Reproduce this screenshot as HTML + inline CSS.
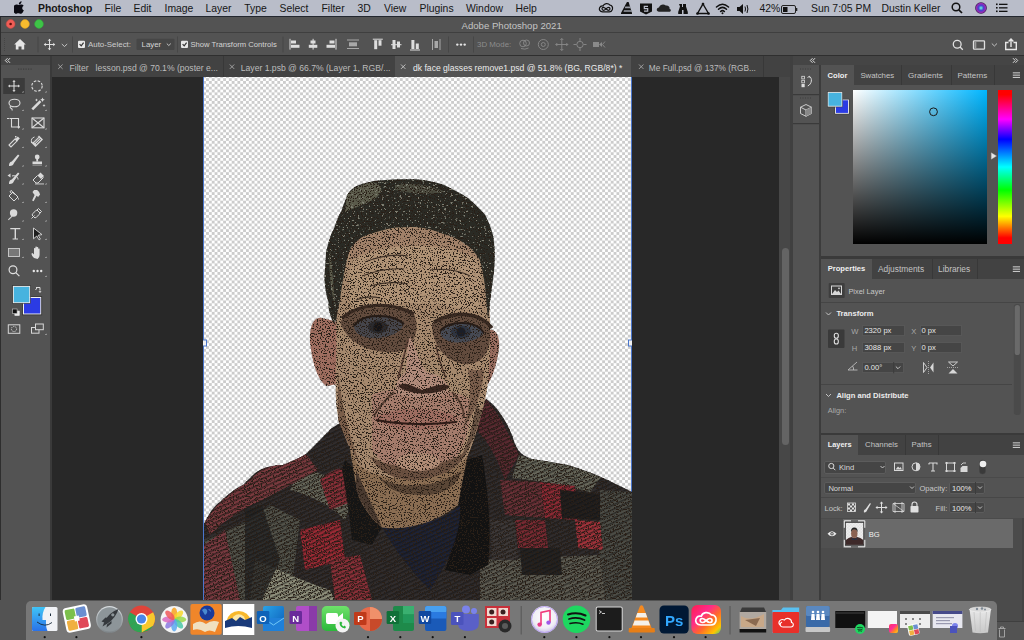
<!DOCTYPE html>
<html><head><meta charset="utf-8">
<style>
*{box-sizing:border-box;margin:0;padding:0}
html,body{width:1024px;height:640px;overflow:hidden;background:#535353;font-family:"Liberation Sans",sans-serif}
.a{position:absolute}
.t{position:absolute;white-space:nowrap;line-height:1}
#menubar{left:0;top:0;width:1024px;height:16px;background:#b9bdc9}
#menubar .t{top:3.6px;font-size:10.4px;color:#161616}
#titlebar{left:0;top:16px;width:1024px;height:17px;background:#535353;border-top:1px solid #23272f;border-bottom:1px solid #3f3f3f}
#opts{left:0;top:33px;width:1024px;height:23px;background:#535353;border-bottom:1px solid #2f2f2f}
#toolhdr{left:0;top:56px;width:50px;height:9px;background:#454545}
#tools{left:0;top:65px;width:50px;height:535px;background:#535353}
#tabbar{left:52px;top:56px;width:740px;height:21px;background:#424242}
#canvas{left:52px;top:77px;width:727px;height:523px;background:#282828}
#vscroll{left:779px;top:77px;width:13px;height:523px;background:#474747}
#phdr{left:793px;top:56px;width:231px;height:9px;background:#454545}
#strip{left:793px;top:65px;width:26px;height:535px;background:#535353}
#panels{left:821px;top:65px;width:203px;height:535px;background:#535353}
</style></head><body>
<div id="menubar" class="a">
<svg class="a" style="left:14px;top:1px" width="11" height="13" viewBox="0 0 11 13"><path d="M7.6 0.3c0.1 0.9-0.3 1.7-0.8 2.3-0.5 0.6-1.3 1-2 0.9-0.1-0.8 0.3-1.7 0.8-2.2 0.5-0.6 1.4-1 2-1z M9.9 9.3c-0.3 0.7-0.5 1-0.9 1.6-0.6 0.9-1.4 1.9-2.4 1.9-0.9 0-1.1-0.6-2.3-0.6-1.2 0-1.5 0.6-2.4 0.6-1 0-1.7-0.9-2.3-1.8C-1.9 8.6-1 5.2 0.5 4.2 1.1 3.7 1.8 3.5 2.5 3.5c1 0 1.6 0.6 2.4 0.6 0.8 0 1.3-0.6 2.4-0.6 0.9 0 1.8 0.5 2.4 1.3-2.1 1.2-1.8 4.2 0.2 4.5z" fill="#0a0a12"/></svg>
<span class="t" style="left:38px;font-weight:700">Photoshop</span>
<span class="t" style="left:104.5px">File</span>
<span class="t" style="left:133.5px">Edit</span>
<span class="t" style="left:164.5px">Image</span>
<span class="t" style="left:205.5px">Layer</span>
<span class="t" style="left:244.3px">Type</span>
<span class="t" style="left:279.5px">Select</span>
<span class="t" style="left:321.5px">Filter</span>
<span class="t" style="left:357.5px">3D</span>
<span class="t" style="left:384px">View</span>
<span class="t" style="left:419.5px">Plugins</span>
<span class="t" style="left:466px">Window</span>
<span class="t" style="left:515.5px">Help</span>
<svg class="a" style="left:598px;top:2px" width="200" height="13" viewBox="0 0 200 13">
 <g fill="none" stroke="#111" stroke-width="1.2">
  <path d="M4.5 9.8 C1.8 9.8 0.8 7.5 1.6 5.8 C2.3 4.3 3.8 3.8 5 4 C6 1.3 10 0.6 12 3.2 C14 3.3 15 5.5 14.4 7.5 C13.9 9 12.8 9.8 11.3 9.8 Z"/>
  <path d="M5.5 8.3 C3.8 8.3 3.3 5.3 5.3 5.3 C7.3 5.3 8.5 8.3 10.5 8.3 C12.5 8.3 12.5 5.3 10.5 5.3 C8.5 5.3 7.5 8.3 5.5 8.3Z"/>
 </g>
 <path d="M29.5 -1 L30.3 -1 L34 11 L34 12 L23 12 L23 11 Z" fill="#111"/>
 <path d="M27.3 4.5 L32.5 4.5 L33 6.2 L26.8 6.2Z M26 8.3 L33.8 8.3 L34.3 9.8 L25.5 9.8Z" fill="#9a9ea8"/>
 <path d="M42 1.5 L54 1.5 L54 9.5 L48 12.5 L42 9.5Z" fill="#111"/>
 <path d="M50 4.3 H46.3 V6.7 H49.7 V9.1 H46" fill="none" stroke="#b9bdc9" stroke-width="1.2"/>
 <path d="M61 9.8 C58 9.8 58 5.8 61 5.6 C61.8 2.6 65.5 1.3 67.8 3.6 C70 3.2 72 4.8 71.6 7 C73.5 7.4 73.2 9.8 71 9.8Z" fill="#222"/>
 <path d="M81 2h3v3h1V2h3v2.5l1.8 5.5v2h-4.3V8h-1.5v4H80.2v-2L82 4.5z" fill="#111"/>
 <path d="M105 2 L110.5 11.5 L99.5 11.5 Z" fill="none" stroke="#111" stroke-width="1.4"/>
 <circle cx="105" cy="2" r="1.3" fill="#111"/><circle cx="99.5" cy="11.5" r="1.3" fill="#111"/><circle cx="110.5" cy="11.5" r="1.3" fill="#111"/>
 <g fill="none" stroke="#111" stroke-width="1.5" stroke-linecap="round">
  <path d="M118.5 5 Q124.5 -0.5 130.5 5"/><path d="M120.5 7.3 Q124.5 3.5 128.5 7.3"/><path d="M122.6 9.5 Q124.5 7.8 126.4 9.5"/>
 </g>
 <circle cx="124.5" cy="11.3" r="1" fill="#111"/>
 <path d="M139 5h2.5l3.5-3v10l-3.5-3H139z" fill="#111"/>
 <g fill="none" stroke="#111" stroke-width="1"><path d="M147 4.5q1 2.5 0 5"/><path d="M149 3q1.8 4 0 8"/></g>
 <rect x="183.5" y="3.5" width="14" height="8" rx="1.5" fill="none" stroke="#222" stroke-width="1"/>
 <rect x="185" y="5" width="4.5" height="5" fill="#111"/>
 <rect x="198" y="6" width="1.3" height="3" fill="#222"/>
</svg>
<span class="t" style="left:759.5px">42%</span>
<span class="t" style="left:811px">Sun 7:05 PM</span>
<span class="t" style="left:881.5px">Dustin Keller</span>
<svg class="a" style="left:950px;top:1px" width="60" height="14" viewBox="0 0 60 14">
 <circle cx="6" cy="6" r="3.8" fill="none" stroke="#111" stroke-width="1.5"/>
 <path d="M8.8 8.8 L12 12" stroke="#111" stroke-width="1.7"/>
 <defs><radialGradient id="siri" cx="50%" cy="50%" r="50%"><stop offset="0" stop-color="#6fd"/><stop offset="0.45" stop-color="#4a3fd0"/><stop offset="0.8" stop-color="#9a2bb0"/><stop offset="1" stop-color="#1a1040"/></radialGradient></defs>
 <circle cx="31" cy="7" r="5.8" fill="url(#siri)"/>
 <g fill="#111"><rect x="46" y="2.5" width="1.6" height="1.6"/><rect x="46" y="6" width="1.6" height="1.6"/><rect x="46" y="9.5" width="1.6" height="1.6"/>
 <rect x="49" y="2.7" width="8.5" height="1.3"/><rect x="49" y="6.2" width="8.5" height="1.3"/><rect x="49" y="9.7" width="8.5" height="1.3"/></g>
</svg>
</div>
<div id="titlebar" class="a">
<div class="a" style="left:0;top:0;width:1px;height:15px;background:#2a2a2a"></div>
<svg class="a" style="left:0;top:-1px" width="50" height="16" viewBox="0 0 50 16">
<circle cx="10.6" cy="8" r="4.4" fill="#ef5d56" stroke="#d24a43" stroke-width="0.5"/><circle cx="10.6" cy="8" r="1.3" fill="#5a0e0a"/>
<circle cx="25" cy="8" r="4.4" fill="#f8bb2e" stroke="#d89c22" stroke-width="0.5"/>
<circle cx="39" cy="8" r="4.4" fill="#3ec447" stroke="#2fa83a" stroke-width="0.5"/>
</svg>
<span class="t" style="left:461.5px;top:3.7px;font-size:9.6px;color:#c4c4c4">Adobe Photoshop 2021</span>
</div>
<div id="opts" class="a">
<div class="a" style="left:4px;top:5px;width:1px;height:13px;border-left:1px dotted #454545"></div>
<svg class="a" style="left:0;top:0" width="300" height="23" viewBox="0 0 300 23">
 <path d="M20 6 L25.8 11.6 L24.2 11.6 L24.2 16.4 L21.5 16.4 L21.5 13.5 L18.5 13.5 L18.5 16.4 L15.8 16.4 L15.8 11.6 L14.2 11.6 Z" fill="#e6e6e6"/>
 <rect x="37.5" y="3.5" width="1" height="16" fill="#474747"/>
 <g fill="#e0e0e0"><rect x="44.5" y="11" width="10" height="1"/><rect x="49" y="6.5" width="1" height="10"/>
 <path d="M49.5 5.8 L51.3 7.8 L47.7 7.8Z M49.5 17.2 L51.3 15.2 L47.7 15.2Z M43.8 11.5 L45.8 9.7 L45.8 13.3Z M55.2 11.5 L53.2 9.7 L53.2 13.3Z"/></g>
 <path d="M61.8 11 L64.5 13.5 L67.2 11" fill="none" stroke="#cfcfcf" stroke-width="0.9"/>
 <rect x="72" y="3.5" width="1" height="16" fill="#474747"/>
 <rect x="78" y="7.8" width="7" height="7.2" rx="1" fill="#e8e8e8"/>
 <path d="M79.6 11.2 L81.2 12.9 L83.6 9.6" fill="none" stroke="#333" stroke-width="1.2"/>
 <rect x="136.5" y="5.7" width="38" height="11.2" rx="1" fill="#464646"/>
 <path d="M166.8 10.6 L168.8 12.5 L170.8 10.6" fill="none" stroke="#cfcfcf" stroke-width="0.9"/>
 <rect x="177" y="3.5" width="1" height="16" fill="#474747"/>
 <rect x="181" y="7.8" width="7" height="7.2" rx="1" fill="#e8e8e8"/>
 <path d="M182.6 11.2 L184.2 12.9 L186.6 9.6" fill="none" stroke="#333" stroke-width="1.2"/>
 <rect x="282.5" y="3.5" width="1" height="16" fill="#474747"/>
</svg>
<span class="t" style="left:88px;top:8.2px;font-size:7.9px;color:#cdcdcd">Auto-Select:</span>
<span class="t" style="left:141.5px;top:8.2px;font-size:7.9px;color:#d4d4d4">Layer</span>
<span class="t" style="left:190.5px;top:8.2px;font-size:7.65px;color:#d4d4d4">Show Transform Controls</span>
<svg class="a" style="left:280px;top:0" width="744" height="23" viewBox="280 0 744 23">
 <g fill="#dedede">
  <rect x="289.5" y="5.8" width="1" height="10.8"/><rect x="291" y="7.5" width="5" height="3"/><rect x="291" y="11.8" width="8.5" height="3"/>
  <rect x="312.6" y="5.8" width="1" height="10.8"/><rect x="310.5" y="7.5" width="5" height="3"/><rect x="308.8" y="11.8" width="8.5" height="3"/>
  <rect x="335.5" y="5.8" width="1" height="10.8"/><rect x="329.5" y="7.5" width="5" height="3"/><rect x="326.5" y="11.8" width="8.5" height="3"/>
 </g>
 <g fill="#a8a8a8"><rect x="347" y="6.5" width="12" height="1"/><rect x="347" y="15" width="12" height="1"/><rect x="349" y="9.3" width="8" height="4"/></g>
 <g fill="#dedede">
  <rect x="372.8" y="5.7" width="10" height="1"/><rect x="374.2" y="7.2" width="3" height="9"/><rect x="378.5" y="7.2" width="3" height="5.5"/>
  <rect x="391" y="11.2" width="10.5" height="1"/><rect x="392.5" y="7" width="3" height="9"/><rect x="397" y="8.5" width="3" height="6"/>
  <rect x="410" y="16.5" width="10" height="1"/><rect x="411.4" y="7" width="3" height="9"/><rect x="415.8" y="10.5" width="3" height="5.5"/>
 </g>
 <g fill="#a8a8a8"><rect x="432" y="6" width="1" height="11"/><rect x="439.5" y="6" width="1" height="11"/><rect x="434.5" y="8" width="3.5" height="7"/></g>
 <rect x="448" y="3.5" width="1" height="16" fill="#474747"/>
 <g fill="#e6e6e6"><circle cx="457.3" cy="11.6" r="1.2"/><circle cx="461" cy="11.6" r="1.2"/><circle cx="464.7" cy="11.6" r="1.2"/></g>
 <rect x="473" y="3.5" width="1" height="16" fill="#474747"/>
 <g fill="none" stroke="#8a8a8a" stroke-width="0.9">
  <circle cx="523" cy="10.5" r="3.3"/><circle cx="526.5" cy="10" r="3"/><path d="M521 15.5 Q525 17 528.5 15"/>
  <circle cx="543.3" cy="11.5" r="5"/><circle cx="543.3" cy="11.5" r="2"/>
  <path d="M561.8 5.5v12M555.8 11.5h12"/><path d="M560.3 7l1.5-1.5 1.5 1.5M560.3 16l1.5 1.5 1.5-1.5M557.3 10l-1.5 1.5 1.5 1.5M566.3 10l1.5 1.5-1.5 1.5"/>
  <circle cx="580" cy="11.5" r="3.2"/><path d="M580 5v3M580 15v3M573.5 11.5h3M583.5 11.5h3"/>
 </g>
 <g fill="#8a8a8a"><rect x="593" y="9" width="6" height="5"/><path d="M599 11.5l3-2.5v5z"/></g>
 <path d="M605 8.5l-2.5 3 2.5 3" fill="none" stroke="#8a8a8a" stroke-width="0.9"/>
 <g fill="none" stroke="#e0e0e0" stroke-width="1.3">
  <circle cx="957.2" cy="11.2" r="3.9"/><path d="M960 14l2.8 2.8"/>
  <rect x="973.5" y="7.8" width="11" height="8.4" rx="0.8"/>
 </g>
 <rect x="974.5" y="8.8" width="1.8" height="6.4" fill="#9a9a9a"/>
 <path d="M991.8 10.5 L994.4 13 L997 10.5" fill="none" stroke="#cfcfcf" stroke-width="0.9"/>
 <g fill="none" stroke="#e6e6e6" stroke-width="1.4">
  <path d="M1008.5 9.5 H1005.7 V16.5 H1016.3 V9.5 H1013.5"/><path d="M1011 14 V6.3"/><path d="M1008.6 8.4 L1011 6 L1013.4 8.4"/>
 </g>
</svg>
<span class="t" style="left:477px;top:8.2px;font-size:7.9px;color:#8c8c8c">3D Mode:</span>
</div>
<div id="toolhdr" class="a"><svg class="a" style="left:0;top:0" width="20" height="9"><path d="M7.5 2.2L5.3 4.5 7.5 6.8M10 2.2L7.8 4.5 10 6.8" fill="none" stroke="#dddddd" stroke-width="1"/></svg></div>
<div id="tools" class="a">
<svg class="a" style="left:0;top:-65px" width="51" height="350" viewBox="0 0 51 350">
 <rect x="0" y="56" width="1" height="544" fill="#3a3a3a"/>
 <g fill="#3e3e3e"><rect x="18" y="68.5" width="1.2" height="1.2"/><rect x="20.5" y="68.5" width="1.2" height="1.2"/><rect x="23" y="68.5" width="1.2" height="1.2"/><rect x="25.5" y="68.5" width="1.2" height="1.2"/><rect x="28" y="68.5" width="1.2" height="1.2"/><rect x="30.5" y="68.5" width="1.2" height="1.2"/></g>
 <rect x="3.2" y="78" width="21.6" height="16" fill="#3b3b3b"/>
 <g fill="#e4e4e4">
  <rect x="9" y="85.5" width="10" height="1"/><rect x="13.5" y="81" width="1" height="10"/>
  <path d="M14 80l1.6 1.8h-3.2z M14 92l1.6-1.8h-3.2z M8 86l1.8-1.6v3.2z M20 86l-1.8-1.6v3.2z"/>
 </g>
 <circle cx="37" cy="86" r="5.2" fill="none" stroke="#dcdcdc" stroke-width="1.1" stroke-dasharray="2.6 1.5"/>
 <g fill="#d0d0d0">
  <path d="M22 92.5h1.5v-1.5z"/><path d="M45 92.5h1.5v-1.5z"/>
  <path d="M22 111h1.5v-1.5z"/><path d="M45 111h1.5v-1.5z"/>
  <path d="M22 129.5h1.5v-1.5z"/><path d="M45 129.5h1.5v-1.5z"/>
  <path d="M22 148h1.5v-1.5z"/><path d="M45 148h1.5v-1.5z"/>
  <path d="M22 166.5h1.5v-1.5z"/><path d="M45 166.5h1.5v-1.5z"/>
  <path d="M22 184.5h1.5v-1.5z"/><path d="M45 184.5h1.5v-1.5z"/>
  <path d="M22 203h1.5v-1.5z"/><path d="M45 203h1.5v-1.5z"/>
  <path d="M22 221.5h1.5v-1.5z"/><path d="M45 221.5h1.5v-1.5z"/>
  <path d="M22 240h1.5v-1.5z"/><path d="M45 240h1.5v-1.5z"/>
  <path d="M22 258h1.5v-1.5z"/><path d="M45 258h1.5v-1.5z"/>
  <path d="M45 277h1.5v-1.5z"/><path d="M45 335h1.5v-1.5z"/>
 </g>
 <g fill="none" stroke="#dadada" stroke-width="1.1">
  <ellipse cx="14.5" cy="103" rx="5.5" ry="3.8"/>
  <path d="M10.5 106 q-1 2 1 2.5 q1 0.5 0.5 2"/>
  <path d="M9.5 118.5h2v8.5h8.5M11.5 118.5h7v7M18.5 125.5v3"/><path d="M7 118.5h2M17.5 127h2.5"/>
  <rect x="32" y="118" width="12" height="9.8"/><path d="M32 118l12 9.8M44 118l-12 9.8"/>
  <path d="M10 146l-1-1 6.2-6.2 2 2-6.2 6.2z"/>
 </g>
 <g fill="#dadada">
  <path d="M33.2 110.3l-1.8-1.8 8.2-8.2 1.8 1.8z"/><path d="M42.5 97.5l0.7 1.6 1.6 0.7-1.6 0.7-0.7 1.6-0.7-1.6-1.6-0.7 1.6-0.7z"/><path d="M36.5 98.5l0.5 1 1 0.5-1 0.5-0.5 1-0.5-1-1-0.5 1-0.5z"/><path d="M44 104l0.5 1 1 0.5-1 0.5-0.5 1-0.5-1-1-0.5 1-0.5z"/>
  <path d="M14.8 139.5l3-3 2 2-3 3z"/><rect x="15" y="136" width="1.5" height="1.5"/>
  <path d="M31.5 143l7.5-7.5 4 4-7.5 7.5z"/>
  <path d="M9 166c-0.2-2.5 0.8-4 2.8-4.6l6.2-7 1.4 1.2-5.4 7.4c-0.6 1.8-2 3.2-5 3z"/>
  <circle cx="37.2" cy="157" r="2.4"/><rect x="36.3" y="158" width="1.8" height="3.5"/><path d="M32.5 161.5h9.5v2.5h-9.5z"/><rect x="32.5" y="164.5" width="9.5" height="1.2" fill="#999"/>
 </g>
 <g fill="#505050"><path d="M33 141.5l5-5 0.5 0.5-5 5z M34.3 142.8l5-5 0.5 0.5-5 5z M35.6 144.1l5-5 0.5 0.5-5 5z"/></g>
 <path d="M31.5 143 q-1-5 3-6" fill="none" stroke="#dadada" stroke-width="1"/>
 <g fill="#dadada">
  <path d="M9 184c-0.2-2.5 0.8-4 2.8-4.6l6.2-7 1.4 1.2-5.4 7.4c-0.6 1.8-2 3.2-5 3z"/>
  <path d="M7.5 175.5l3-2v4z"/>
  <path d="M37.5 175.5l3-3 3.5 3.5-3 3z"/><path d="M35 183.5h9v0.9h-9z"/>
  <circle cx="13.6" cy="213" r="3.7"/><path d="M8 219.5l4-4 0.7 0.7-4 4z"/>
  <path d="M10.3 228h10v1.3h-4.3v9.2h2v1h-5.4v-1h2v-9.2h-4.3z"/>
  
  <path d="M32.5 192l1.6-2 3 0 2 2 1 2.5-2 2.5-1.5-1.3-3 5.5-1.5-0.8 2.5-5.5-1.5-2z"/>
 </g>
 <path d="M37.5 175.5l-4.5 4.5 3 3 2 0 5.5-5.5" fill="none" stroke="#dadada" stroke-width="1"/>
 <g fill="none" stroke="#dadada" stroke-width="1">
  <path d="M12 176c3-1 6 0.5 6 3.5"/>
  <path d="M9 196l4-4 5 5-4 4z"/><path d="M11.5 193.5l-1.5-2 1.5-1 3 4"/>
  <path d="M32 215c1-2 3-4 5-5l3 3c-1 2-3 4-5 5l-3-3z"/><path d="M37 210l1.5-1.5 3 3-1.5 1.5"/><path d="M31.5 218.5l3-3"/>
 </g>
 <path d="M18.5 197.5q1 1.5 0 2.5q-1 -1 0 -2.5" fill="#dadada"/>
 <path d="M33.5 228l8.5 6.6-3.8 0.6 2.2 3.9-1.4 0.8-2.2-3.9-3.3 2.8z" fill="#1e1e1e" stroke="#dadada" stroke-width="0.9"/>
 <rect x="8.5" y="248.5" width="11" height="8" fill="#777" stroke="#cfcfcf" stroke-width="0.9"/>
 <path d="M34 258q-2.5-2-2.5-4.5l1-0.5 1.5 1.5v-6.3q0.9-0.6 1.4 0v5 -6.5q0.9-0.6 1.4 0v6.5 -6q0.9-0.6 1.4 0v6 -4.5q0.9-0.6 1.4 0v6.2q0 2.5-2 4.1z" fill="#dcdcdc"/>
 <g fill="none" stroke="#e0e0e0" stroke-width="1.2"><circle cx="13" cy="269.8" r="3.9"/><path d="M15.8 272.6l3.6 3.6"/></g>
 <g fill="#e6e6e6"><circle cx="33.8" cy="271" r="1.2"/><circle cx="37.5" cy="271" r="1.2"/><circle cx="41.2" cy="271" r="1.2"/></g>
 <rect x="23.5" y="297.5" width="17.3" height="16.5" fill="#2b3be4" stroke="#f0f0f0" stroke-width="1"/>
 <rect x="22.5" y="296.5" width="19.3" height="18.5" fill="none" stroke="#333" stroke-width="0.6"/>
 <rect x="13.3" y="286.3" width="16.5" height="16.5" fill="#47b3df" stroke="#f0f0f0" stroke-width="1"/>
 <rect x="12.5" y="285.5" width="18.1" height="18.1" fill="none" stroke="#333" stroke-width="0.6"/>
 <path d="M36 287.5h4v3M35.5 290l1.8-2.5 M41 291l-1 1.5-1-1.5" fill="none" stroke="#dcdcdc" stroke-width="1"/>
 <rect x="14.8" y="311" width="4.6" height="4.6" fill="#eaeaea" stroke="#eaeaea" stroke-width="0.5"/>
 <rect x="12.5" y="309" width="4.6" height="4.6" fill="#111" stroke="#ccc" stroke-width="0.6"/>
 <rect x="8.3" y="324.8" width="11.5" height="8.5" fill="none" stroke="#d8d8d8" stroke-width="1"/>
 <circle cx="14" cy="329" r="2.6" fill="none" stroke="#d8d8d8" stroke-width="0.9" stroke-dasharray="1.3 0.9"/>
 <rect x="31.5" y="327.5" width="7.5" height="5.7" fill="#555" stroke="#d8d8d8" stroke-width="1"/>
 <rect x="35.5" y="324" width="7.8" height="5.7" fill="#555" stroke="#d8d8d8" stroke-width="1"/>
</svg>
</div>
<div class="a" style="left:50px;top:56px;width:2px;height:544px;background:#3a3a3a"></div>
<div id="tabbar" class="a">
<div class="a" style="left:171px;top:0;width:1px;height:21px;background:#383838"></div>
<div class="a" style="left:342.5px;top:0;width:1px;height:21px;background:#383838"></div>
<div class="a" style="left:343px;top:0;width:236px;height:21px;background:#535353"></div>
<div class="a" style="left:711px;top:0;width:1px;height:21px;background:#383838"></div>
<svg class="a" style="left:0;top:0" width="740" height="21">
 <g stroke="#a8a8a8" stroke-width="0.9"><path d="M6.2 8.5l4.4 4.4M10.6 8.5l-4.4 4.4"/><path d="M177.8 8.5l4.4 4.4M182.2 8.5l-4.4 4.4"/><path d="M587 8.5l4.4 4.4M591.4 8.5l-4.4 4.4"/></g>
 <path d="M349 8.5l4.4 4.4M353.4 8.5l-4.4 4.4" stroke="#c8c8c8" stroke-width="0.9"/>
</svg>
<span class="t" style="left:17.5px;top:7.6px;font-size:8.6px;color:#bdbdbd">Filter</span><span class="t" style="left:43.6px;top:7.6px;font-size:8.6px;color:#bdbdbd">lesson.psd @ 70.1% (poster e...</span>
<span class="t" style="left:188.8px;top:7.6px;font-size:8.6px;color:#bdbdbd">Layer 1.psb @ 66.7% (Layer 1, RGB/...</span>
<span class="t" style="left:361px;top:7.6px;font-size:8.6px;color:#ececec">dk face glasses remove1.psd @ 51.8% (BG, RGB/8*) *</span>
<span class="t" style="left:596.8px;top:7.6px;font-size:8.3px;color:#bdbdbd">Me Full.psd @ 137% (RGB...</span>
</div>
<div id="canvas" class="a"></div>
<svg class="a" style="left:203px;top:77px" width="429" height="523" viewBox="203 77 429 523">
 <defs>
  <pattern id="chk" x="203.2" y="75.3" width="5.7" height="5.7" patternUnits="userSpaceOnUse">
   <rect x="0" y="0" width="5.7" height="5.7" fill="#ffffff"/>
   <rect x="0" y="0" width="2.85" height="2.85" fill="#cccccc"/>
   <rect x="2.85" y="2.85" width="2.85" height="2.85" fill="#cccccc"/>
  </pattern>
  <filter id="spk" x="203" y="77" width="429" height="523" filterUnits="userSpaceOnUse" color-interpolation-filters="sRGB">
   <feTurbulence type="fractalNoise" baseFrequency="0.75" numOctaves="2" seed="7" result="n"/>
   <feColorMatrix in="n" type="matrix" values="0 0 0 0 0.16  0 0 0 0 0.12  0 0 0 0 0.09  -14 0 0 0 6.2" result="a"/>
   <feComposite in="a" in2="SourceAlpha" operator="in" result="sp"/>
   <feMerge><feMergeNode in="SourceGraphic"/><feMergeNode in="sp"/></feMerge>
  </filter>
 </defs>
 <rect x="204" y="77" width="427" height="523" fill="url(#chk)"/>
 <rect x="203" y="77" width="1" height="523" fill="#4a76cc"/>
 <rect x="631" y="77" width="1" height="523" fill="#4a76cc"/>
<!--P0-->
 <defs>
  <pattern id="strp" width="4" height="4" patternUnits="userSpaceOnUse" patternTransform="rotate(-25)">
   <rect x="0" y="0" width="4" height="1.6" fill="#111"/>
  </pattern>
  <pattern id="strp2" width="4" height="4" patternUnits="userSpaceOnUse" patternTransform="rotate(55)">
   <rect x="0" y="0" width="4" height="1.5" fill="#111"/>
  </pattern>
  <clipPath id="shirtclip"><path d="M204 524 L205 522 C210 512 214 506 220 502 C228 494 236 488 243 485 C250 478 255 472 262 469 C270 466 276 465 283 465 C292 461 300 458 306 454 C314 446 324 436 332 428 L340 423 L350 440 L356 470 L382 527 L458 505 L466 448 L480 405 L486 399 C496 405 506 420 512 435 C516 448 519 455 532 459 C545 461 556 463 568 465 C580 469 590 472 601 477 C612 482 622 487 632 492 L632 600 L204 600 Z"/></clipPath>
  <filter id="hairtx" x="300" y="170" width="220" height="170" filterUnits="userSpaceOnUse" color-interpolation-filters="sRGB">
   <feTurbulence type="fractalNoise" baseFrequency="0.45" numOctaves="3" seed="11" result="n"/>
   <feColorMatrix in="n" type="matrix" values="0 0 0 0 0.5  0 0 0 0 0.5  0 0 0 0 0.45  12 0 0 0 -7.6" result="a"/>
   <feComposite in="a" in2="SourceAlpha" operator="in" result="sp"/>
   <feMerge><feMergeNode in="SourceGraphic"/><feMergeNode in="sp"/></feMerge>
  </filter>
 </defs>
 <g id="portrait" filter="url(#spk)">
  <g clip-path="url(#shirtclip)">
   <rect x="204" y="395" width="428" height="205" fill="#312d2d"/>
   <!-- gray light stripes areas -->
   <path d="M204 540 C230 530 250 520 270 505 L300 520 L290 600 L204 600Z" fill="#53534a"/>
   <path d="M255 560 C280 570 300 580 330 590 L335 600 L250 600Z" fill="#8e8e7a"/>
   <path d="M300 470 C320 470 340 480 352 500 L345 520 C330 505 310 495 290 490Z" fill="#67675a"/>
   <path d="M486 399 C500 415 512 440 519 455 L505 480 C498 460 488 440 476 430Z" fill="#5a2a30"/>
   <path d="M519 455 L532 459 L568 465 L601 477 L590 492 L545 482 L512 478Z" fill="#67675a"/>
   <path d="M600 490 L632 492 L632 600 L605 600 L598 540Z" fill="#4c4c45"/>
   <path d="M480 560 L600 555 L605 600 L480 600Z" fill="#5d5b51"/>
   <!-- reds -->
   <path d="M205 522 C215 505 230 492 245 484 L262 469 C275 465 290 462 306 454 L318 470 C300 480 280 490 262 500 C240 510 225 520 210 535Z" fill="#7a3a3e"/>
   <path d="M204 545 L225 530 L240 600 L204 600Z" fill="#7a3a40"/>
   <path d="M300 530 L340 520 L345 560 L305 570Z" fill="#9a2a34"/>
   <path d="M320 480 C330 470 345 465 352 470 L356 500 L330 510Z" fill="#8a3038"/>
   <path d="M330 560 L360 555 L372 600 L335 600Z" fill="#8a3038"/>
   <path d="M540 482 L575 486 L578 520 L545 518Z" fill="#8e2a34"/>
   <path d="M575 520 L600 522 L603 550 L578 548Z" fill="#a0323a"/>
   <path d="M560 490 L600 494 L600 520 L562 518Z" fill="#201e1e"/>
   <path d="M515 520 L545 520 L548 548 L518 548Z" fill="#7a2a32"/>
   <path d="M520 548 L560 548 L562 575 L522 575Z" fill="#232222"/>
   <path d="M500 480 L540 482 L545 518 L505 515Z" fill="#6a3036"/>
   <path d="M490 520 L515 520 L518 560 L492 560Z" fill="#3e3938"/>
   <!-- blacks -->
   <path d="M345 460 L356 470 L382 527 L372 545 L352 540 C350 520 346 490 342 470 Z" fill="#161616"/>
   <path d="M458 505 L466 460 L482 455 C488 490 492 530 488 565 L470 575 L445 570 C452 550 456 530 458 505Z" fill="#121212"/>
   <path d="M245 510 L262 505 L280 560 L262 600 L245 600Z" fill="#232323" opacity="0.8"/>
   <path d="M382 527 C400 528 440 525 460 505 C462 530 450 560 430 590 C410 570 395 550 382 527Z" fill="#1e2336"/>
   <rect x="204" y="395" width="428" height="205" fill="url(#strp)" opacity="0.55"/>
  </g>
  <!-- neck -->
  <path d="M346 425 C352 460 356 490 360 500 C368 515 375 522 382 527.5 C400 530 430 527 458 505 C462 485 466 460 472 440 L484 402 Z" fill="#8a6d52"/>
  <path d="M356 470 C365 490 372 505 382 527 C372 520 362 505 356 490Z" fill="#4a3a30"/>
  <path d="M380 478 C400 490 440 488 462 470 C458 482 450 492 430 495 C400 496 388 490 380 478Z" fill="#5a4636"/>
  <!-- ears -->
  <path d="M322 318 C314 316 309 326 310 342 C312 360 316 378 326 386 L338 384 L338 322 Z" fill="#9e6d5f"/>
  <path d="M488 330 C496 328 500 336 499 348 C497 362 494 374 488 384 L480 380 L482 332 Z" fill="#976c5f"/>
  <!-- face -->
  <path d="M336 318 C334 290 338 245 350 232 C370 218 400 214 430 216 C455 220 475 232 484 250 C488 280 490 300 490 330 C491 360 488 390 484 405 C478 425 475 440 468 455 C458 468 440 478 414 479 C390 479 370 475 358 465 C350 450 344 435 340 423 C332 400 338 360 336 318 Z" fill="#a5886d"/>
  <!-- forehead -->
  <path d="M352 262 C370 240 440 234 474 252 C482 272 482 296 478 312 C430 300 380 300 352 312 C348 292 348 276 352 262Z" fill="#b09376"/>
  <path d="M348 246 C370 226 440 222 478 242 C482 250 484 256 484 262 C450 244 400 238 350 260Z" fill="#a08068" opacity="0.8"/>
  <g fill="none" stroke="#2a1e18" stroke-width="1.2" opacity="0.85">
   <path d="M365 262 C380 256 395 254 408 256"/><path d="M362 276 C378 270 392 268 404 269"/><path d="M370 286 C385 282 398 282 408 284"/>
   <path d="M430 270 C445 268 458 270 470 276"/><path d="M356 300 C365 296 372 296 380 298"/>
  </g>
  <!-- lower face pink -->
  <path d="M372 395 C390 385 450 385 470 400 C472 430 462 460 440 472 C410 478 385 470 372 450Z" fill="#a57c6c"/>
  <!-- shading sides -->
  <path d="M338 370 C342 410 350 440 362 468 C352 452 344 436 338 420 Z" fill="#7a5e4a"/>
  <path d="M476 405 C472 430 466 450 456 466 C466 458 474 440 482 412 Z" fill="#6a5444"/>
  <path d="M370 456 C392 470 432 472 466 452 C460 466 448 476 416 480 C394 480 378 472 370 456Z" fill="#6a5040"/>
  <!-- eye sockets -->
  <path d="M340 322 C350 305 388 304 414 314 C420 328 416 346 398 352 C374 354 348 346 340 322Z" fill="#634c3e"/>
  <path d="M432 324 C445 310 478 312 490 326 C492 350 484 366 462 364 C444 360 432 344 432 324Z" fill="#634c3e"/>
  <path d="M354 326 C362 313 392 313 404 324 C400 335 384 339 370 338 C360 337 354 332 354 326Z" fill="#45454b"/>
  <path d="M440 331 C450 320 476 320 484 333 C478 341 462 344 452 342 C444 340 440 336 440 331Z" fill="#464a54"/>
  <ellipse cx="378" cy="327" rx="10" ry="6.5" fill="#2a2a2e"/>
  <ellipse cx="461" cy="332" rx="10" ry="6.5" fill="#2e3440"/>
  <ellipse cx="378" cy="327" rx="4.5" ry="4.5" fill="#141418"/>
  <ellipse cx="461" cy="332" rx="4.5" ry="4.5" fill="#1a1e28"/>
  <path d="M354 326 C362 313 392 313 404 324" fill="none" stroke="#241a16" stroke-width="2"/>
  <path d="M440 331 C450 320 476 320 484 333" fill="none" stroke="#241a16" stroke-width="2"/>
  <!-- nose -->
  <path d="M410 336 C416 350 420 362 426 372 C438 374 450 382 448 392 C434 400 410 400 396 392 C394 384 400 376 406 372 C408 360 406 348 410 336Z" fill="#b08a7a"/>
  <path d="M408 340 C404 355 402 366 398 378" fill="none" stroke="#5a3e34" stroke-width="1.8"/>
  <path d="M436 345 C438 358 442 368 446 378" fill="none" stroke="#5a3e34" stroke-width="1.5"/>
  <path d="M398 386 C406 380 414 388 422 390 C430 388 440 382 450 386 C444 394 412 398 398 386Z" fill="#3a2620"/>
  <path d="M394 392 C385 400 378 408 374 416" fill="none" stroke="#5a4034" stroke-width="2"/>
  <path d="M452 392 C460 400 464 408 464 418" fill="none" stroke="#5a4034" stroke-width="2"/>
  <path d="M468 370 C472 390 470 410 462 430 C474 415 482 395 484 370Z" fill="#7a5e4c"/>
  <!-- mouth -->
  <path d="M374 418 C395 406 437 406 458 418 C442 432 400 436 374 418Z" fill="#9e6d61"/>
  <path d="M376 420 C400 425 432 425 456 422" fill="none" stroke="#2e1a16" stroke-width="2.2"/>
  <ellipse cx="418" cy="462" rx="22" ry="9" fill="#b08c76"/>
  <!-- brows -->
  <path d="M342 318 C360 302 392 302 414 314" fill="none" stroke="#3a2a22" stroke-width="3.5"/>
  <path d="M434 322 C455 310 480 312 492 328" fill="none" stroke="#3a2a22" stroke-width="3.5"/>
  <g filter="url(#hairtx)">
  <!-- hair -->
  <path d="M334 324 C330 316 328 308 328.6 302.8 C325 290 324.5 283 324.6 276.2 C325 265 326 258 326 252.3 C329 240 331 234 334 228.4 C337 220 339 215 341.9 209.8 C344 203 346 199 347.2 195.2 C350 190 353 188 356.5 186 C365 183 372 181 379 180.6 C392 179 404 179 416 179.3 C426 180 435 182 442.8 184.6 C452 189 461 193 469.4 199.2 C476 205 481 210 485.3 215 C489 223 492 230 493.3 236.4 C494.5 245 495 254 494.6 263 C494 275 492 286 490.6 297.5 C489.5 305 489 312 488 318.7 C486.5 305 486 297 485.3 289.5 C484 278 482 268 480 260.3 C476 253 472 250 469.4 247 C460 240 452 236 442.8 233.7 C434 230 425 228 416 227 C407 227 398 227 389.7 228.4 C380 231 371 233 363 236.4 C357 240 353 245 349.8 249.7 C345 265 342 285 340 300 C338 310 337 315 336.6 318.7 Z" fill="#2a2a24"/>
  <path d="M347 195 C352 189 362 184 372 182 C382 184 385 190 376 198 C366 204 354 208 345 212Z" fill="#5a5a4a"/>
  <path d="M395 185 C410 182 430 184 445 192 C430 195 410 194 395 190Z" fill="#4a4a3e"/>
  <path d="M330 250 C333 270 333 290 336 310 C332 295 328 275 330 250Z" fill="#5a5a4a"/>
  </g>
 </g>
<!--P1-->
  <rect x="200.5" y="340" width="6" height="6" fill="#f0f0f0" stroke="#4a76cc" stroke-width="1"/>
 <rect x="628.5" y="340" width="6" height="6" fill="#f0f0f0" stroke="#4a76cc" stroke-width="1"/>
</svg>
<div id="vscroll" class="a"></div>
<div class="a" style="left:0;top:17px;width:1px;height:583px;background:#2e2e2e"></div>
<div class="a" style="left:781.5px;top:248px;width:7px;height:197px;border-radius:3.5px;background:#646464"></div>
<div id="phdr" class="a"><svg class="a" style="left:0;top:0" width="231" height="9" viewBox="793 56 231 9"><path d="M812.5 58.2L810.3 60.5 812.5 62.8M815 58.2L812.8 60.5 815 62.8" fill="none" stroke="#dddddd" stroke-width="1"/><path d="M1013 58.2L1015.2 60.5 1013 62.8M1015.5 58.2L1017.7 60.5 1015.5 62.8" fill="none" stroke="#dddddd" stroke-width="1"/></svg></div>
<div class="a" style="left:819px;top:65px;width:2px;height:535px;background:#3c3c3c"></div>
<div class="a" style="left:790px;top:56px;width:3px;height:544px;background:#404040"></div>
<div id="strip" class="a">
<svg class="a" style="left:0;top:0" width="26" height="535" viewBox="793 65 26 535">
 <rect x="793" y="65" width="26" height="535" fill="#535353"/>
 <g fill="#3f3f3f"><rect x="800" y="68.5" width="1" height="1"/><rect x="802.5" y="68.5" width="1" height="1"/><rect x="805" y="68.5" width="1" height="1"/><rect x="807.5" y="68.5" width="1" height="1"/><rect x="810" y="68.5" width="1" height="1"/>
 <rect x="800" y="97.5" width="1" height="1"/><rect x="802.5" y="97.5" width="1" height="1"/><rect x="805" y="97.5" width="1" height="1"/><rect x="807.5" y="97.5" width="1" height="1"/><rect x="810" y="97.5" width="1" height="1"/></g>
 <rect x="793" y="94" width="26" height="1.2" fill="#3a3a3a"/>
 <rect x="793" y="123" width="26" height="1.2" fill="#3a3a3a"/>
 <g fill="none" stroke="#dcdcdc" stroke-width="0.8"><rect x="801.8" y="76.3" width="2.6" height="2.6"/><rect x="801.8" y="80.3" width="2.6" height="2.6"/></g>
 <rect x="801.5" y="84" width="3.2" height="3.2" fill="#dcdcdc"/>
 <path d="M807.5 77.5 L809.5 76.3 L810.2 78 M809.5 76.5 C812.5 78 812 84 807.8 86" fill="none" stroke="#dcdcdc" stroke-width="1"/>
 <g fill="none" stroke="#d8d8d8" stroke-width="0.9"><path d="M806 104.5 L811.5 107.2 L811.5 113.5 L806 116.3 L800.5 113.5 L800.5 107.2 Z"/><path d="M800.5 107.2 L806 110 L811.5 107.2 M806 110 V116.3"/></g>
 <path d="M806 110 L811.5 107.2 L811.5 113.5 L806 116.3 Z" fill="#888"/>
</svg>
</div>
<div id="panels" class="a">
 <!-- color panel -->
 <div class="a" style="left:0;top:0;width:203px;height:20px;background:#424242"></div>
 <div class="a" style="left:0;top:0;width:33px;height:20px;background:#535353"></div>
 <div class="a" style="left:80px;top:0;width:1px;height:20px;background:#383838"></div>
 <div class="a" style="left:129.5px;top:0;width:1px;height:20px;background:#383838"></div>
 <div class="a" style="left:173px;top:0;width:1px;height:20px;background:#383838"></div>
 <span class="t" style="left:6.6px;top:6.5px;font-size:7.6px;font-weight:700;color:#f0f0f0">Color</span>
 <span class="t" style="left:39.4px;top:6.5px;font-size:7.8px;color:#c4c4c4">Swatches</span>
 <span class="t" style="left:87px;top:6.5px;font-size:8px;color:#c4c4c4">Gradients</span>
 <span class="t" style="left:136.5px;top:6.5px;font-size:8px;color:#c4c4c4">Patterns</span>
 <div class="a" style="left:32px;top:25px;width:133.5px;height:154px;background:linear-gradient(to bottom,rgba(0,0,0,0),#000),linear-gradient(to right,#fff,#00b6ff)"></div>
 <div class="a" style="left:177.3px;top:25px;width:14px;height:153.7px;background:linear-gradient(to bottom,#ff0000 0%,#ff0000 3%,#ff00ff 19%,#0000ff 32%,#00ffff 50%,#00ff00 65%,#ffff00 82%,#ff0000 96%,#ff0000 100%)"></div>
 <svg class="a" style="left:0;top:0" width="203" height="535" viewBox="821 65 203 535">
  <g fill="#c8c8c8"><rect x="1012.8" y="72.3" width="7.2" height="1.1"/><rect x="1012.8" y="74.6" width="7.2" height="1.1"/><rect x="1012.8" y="76.9" width="7.2" height="1.1"/></g>
  <rect x="835.5" y="99.8" width="13" height="13.6" fill="#2b3be4" stroke="#e8e8e8" stroke-width="1"/>
  <rect x="834.8" y="99.1" width="14.4" height="15" fill="none" stroke="#3a3a3a" stroke-width="0.5"/>
  <rect x="828" y="92.3" width="14" height="14" fill="#47b3df" stroke="#e8e8e8" stroke-width="1"/>
  <rect x="827.3" y="91.6" width="15.4" height="15.4" fill="none" stroke="#3a3a3a" stroke-width="0.5"/>
  <circle cx="933.5" cy="111.8" r="3.9" fill="none" stroke="#1a1a1a" stroke-width="1"/>
  <path d="M991.3 152.8 L996.5 156 L991.3 159.2 Z" fill="#e8e8e8" stroke="#bbb" stroke-width="0.4"/>
 </svg>
 <!-- gap -->
 <div class="a" style="left:0;top:191px;width:203px;height:3px;background:#3a3a3a"></div>
 <!-- properties tabs y259-279 -->
 <div class="a" style="left:0;top:194px;width:203px;height:20px;background:#424242"></div>
 <div class="a" style="left:0;top:194px;width:51px;height:20px;background:#535353"></div>
 <div class="a" style="left:110.5px;top:194px;width:1px;height:20px;background:#383838"></div>
 <div class="a" style="left:155.5px;top:194px;width:1px;height:20px;background:#383838"></div>
 <span class="t" style="left:6.7px;top:200.4px;font-size:7.6px;font-weight:700;color:#f0f0f0">Properties</span>
 <span class="t" style="left:57px;top:200.4px;font-size:8.4px;color:#c4c4c4">Adjustments</span>
 <span class="t" style="left:117px;top:200.4px;font-size:8.4px;color:#c4c4c4">Libraries</span>
 <span class="t" style="left:27.4px;top:222.5px;font-size:7.4px;color:#c8c8c8">Pixel Layer</span>
 <div class="a" style="left:0;top:237px;width:203px;height:1px;background:#454545"></div>
 <span class="t" style="left:15.4px;top:245.4px;font-size:7.6px;font-weight:700;color:#ececec">Transform</span>
 <div class="a" style="left:40.6px;top:260px;width:43px;height:10.5px;background:#454545;border:1px solid #575757"></div>
 <div class="a" style="left:98.6px;top:260px;width:42px;height:10.5px;background:#454545;border:1px solid #575757"></div>
 <div class="a" style="left:40.6px;top:277px;width:43px;height:10.5px;background:#454545;border:1px solid #575757"></div>
 <div class="a" style="left:98.6px;top:277px;width:42px;height:10.5px;background:#454545;border:1px solid #575757"></div>
 <div class="a" style="left:40.6px;top:296.5px;width:42px;height:11.6px;background:#454545;border:1px solid #575757"></div>
 <span class="t" style="left:30.3px;top:262.6px;font-size:7.6px;color:#a8a8a8">W</span>
 <span class="t" style="left:90.3px;top:262.6px;font-size:7.6px;color:#a8a8a8">X</span>
 <span class="t" style="left:30.8px;top:279.6px;font-size:7.6px;color:#a8a8a8">H</span>
 <span class="t" style="left:90.3px;top:279.6px;font-size:7.6px;color:#a8a8a8">Y</span>
 <span class="t" style="left:43.4px;top:262.4px;font-size:7.6px;color:#e8e8e8">2320 px</span>
 <span class="t" style="left:100.5px;top:262.4px;font-size:7.6px;color:#e8e8e8">0 px</span>
 <span class="t" style="left:43.4px;top:279.4px;font-size:7.6px;color:#e8e8e8">3088 px</span>
 <span class="t" style="left:100.5px;top:279.4px;font-size:7.6px;color:#e8e8e8">0 px</span>
 <span class="t" style="left:43.4px;top:299.2px;font-size:7.6px;color:#e8e8e8">0.00°</span>
 <div class="a" style="left:0;top:319px;width:191px;height:1px;background:#454545"></div>
 <span class="t" style="left:15.4px;top:327px;font-size:7.6px;font-weight:700;color:#ececec">Align and Distribute</span>
 <span class="t" style="left:6.8px;top:342.3px;font-size:7.4px;color:#aaaaaa">Align:</span>
 <!-- gap -->
 <div class="a" style="left:0;top:368px;width:203px;height:2px;background:#3a3a3a"></div>
 <!-- layers tabs y435-455 -->
 <div class="a" style="left:0;top:370px;width:203px;height:20px;background:#424242"></div>
 <div class="a" style="left:0;top:370px;width:37px;height:20px;background:#535353"></div>
 <div class="a" style="left:84px;top:370px;width:1px;height:20px;background:#383838"></div>
 <div class="a" style="left:117px;top:370px;width:1px;height:20px;background:#383838"></div>
 <span class="t" style="left:6.7px;top:376.4px;font-size:7.4px;font-weight:700;color:#f0f0f0">Layers</span>
 <span class="t" style="left:44px;top:376.4px;font-size:7.8px;color:#c4c4c4">Channels</span>
 <span class="t" style="left:90.6px;top:376.4px;font-size:7.8px;color:#c4c4c4">Paths</span>
 <div class="a" style="left:3px;top:396px;width:62.4px;height:13px;background:#454545;border:1px solid #5c5c5c;border-radius:2px"></div>
 <span class="t" style="left:18px;top:399.4px;font-size:7.6px;color:#d8d8d8">Kind</span>
 <div class="a" style="left:0;top:412px;width:203px;height:1px;background:#4a4a4a"></div>
 <div class="a" style="left:3px;top:416.6px;width:92px;height:12.4px;background:#454545;border:1px solid #5c5c5c;border-radius:2px"></div>
 <span class="t" style="left:7.4px;top:419.8px;font-size:7.6px;color:#d8d8d8">Normal</span>
 <span class="t" style="left:98.4px;top:419.8px;font-size:7.6px;color:#c8c8c8">Opacity:</span>
 <div class="a" style="left:128px;top:416.6px;width:36.4px;height:12.4px;background:#454545;border:1px solid #5c5c5c;border-radius:2px"></div>
 <div class="a" style="left:154px;top:416.6px;width:1px;height:12.4px;background:#3c3c3c"></div>
 <span class="t" style="left:131px;top:419.8px;font-size:7.6px;color:#e8e8e8">100%</span>
 <div class="a" style="left:0;top:432px;width:203px;height:1px;background:#474747"></div>
 <span class="t" style="left:3.5px;top:439.5px;font-size:7.6px;color:#c8c8c8">Lock:</span>
 <span class="t" style="left:114.5px;top:439.5px;font-size:7.6px;color:#c8c8c8">Fill:</span>
 <div class="a" style="left:128px;top:436.6px;width:36.4px;height:11.8px;background:#454545;border:1px solid #5c5c5c;border-radius:2px"></div>
 <div class="a" style="left:154px;top:436.6px;width:1px;height:11.8px;background:#3c3c3c"></div>
 <span class="t" style="left:131px;top:439.5px;font-size:7.6px;color:#e8e8e8">100%</span>
 <div class="a" style="left:0;top:453px;width:203px;height:103px;background:#4b4b4b"></div>
 <div class="a" style="left:0;top:453.8px;width:21.7px;height:29.2px;background:#505050"></div>
 <div class="a" style="left:21.7px;top:453.8px;width:170px;height:29.2px;background:#6a6a6a"></div>
 <div class="a" style="left:0;top:556px;width:203px;height:1px;background:#3f3f3f"></div>
 <div class="a" style="left:201px;top:453px;width:2px;height:103px;background:#444"></div>
 <svg class="a" style="left:175px;top:560px" width="12" height="14"><path d="M2.5 3.5h7M4.5 3.5v-1.5h3v1.5M3.5 4.5v7.5h5v-7.5" fill="none" stroke="#aaa" stroke-width="0.9"/></svg>
 <span class="t" style="left:47.8px;top:465.5px;font-size:7.6px;color:#f0f0f0">BG</span>

 <svg class="a" style="left:0;top:0" width="203" height="535" viewBox="821 65 203 535">
  <g fill="#c8c8c8"><rect x="1012.8" y="266.3" width="7.2" height="1.1"/><rect x="1012.8" y="268.6" width="7.2" height="1.1"/><rect x="1012.8" y="270.9" width="7.2" height="1.1"/>
  <rect x="1012.8" y="442.3" width="7.2" height="1.1"/><rect x="1012.8" y="444.6" width="7.2" height="1.1"/><rect x="1012.8" y="446.9" width="7.2" height="1.1"/></g>
  <rect x="828.7" y="283" width="16" height="15" rx="1" fill="#3e3e3e"/>
  <rect x="831.5" y="286" width="10" height="8.5" fill="none" stroke="#d8d8d8" stroke-width="1"/>
  <path d="M832 294 L835 290 L837 292 L838.5 290.5 L841 294Z" fill="#d8d8d8"/><circle cx="839" cy="288.3" r="0.9" fill="#d8d8d8"/>
  <rect x="1013.8" y="304" width="7" height="111" rx="3" fill="#4a4a4a"/>
  <rect x="1014.7" y="305" width="5.2" height="50" rx="2.6" fill="#6a6a6a"/>
  <path d="M826 312.5 L828.5 315 L831 312.5" fill="none" stroke="#d0d0d0" stroke-width="0.9"/>
  <path d="M826 394 L828.5 396.5 L831 394" fill="none" stroke="#d0d0d0" stroke-width="0.9"/>
  <rect x="828" y="329.5" width="16.5" height="18.5" rx="1" fill="#3a3a3a"/>
  <g fill="none" stroke="#e0e0e0" stroke-width="1.1"><rect x="834.3" y="333.2" width="4" height="5" rx="2"/><rect x="834.3" y="339" width="4" height="5" rx="2"/></g>
  <path d="M848 370 L857 362 M848 370 H857.5 M852.5 366 q1.5 2 1 4" fill="none" stroke="#bbb" stroke-width="0.9"/>
  <path d="M893.7 362 V373.3" stroke="#3c3c3c" stroke-width="1"/>
  <path d="M895.8 366.5 L898 368.7 L900.2 366.5" fill="none" stroke="#d0d0d0" stroke-width="0.9"/>
  <path d="M923.5 362.5 L927 367.5 L923.5 372.5Z" fill="none" stroke="#d8d8d8" stroke-width="0.9"/>
  <path d="M933.5 362.5 L930 367.5 L933.5 372.5Z" fill="#d8d8d8"/>
  <path d="M928.5 361 V374" stroke="#d8d8d8" stroke-width="0.6" stroke-dasharray="1 1"/>
  <path d="M948.5 362 H957.5 L953 366 Z" fill="none" stroke="#d8d8d8" stroke-width="0.9"/>
  <path d="M948.5 373.5 H957.5 L953 369 Z" fill="#d8d8d8"/>
  <path d="M947 367.5 H959" stroke="#d8d8d8" stroke-width="0.6" stroke-dasharray="1 1"/>
  <!-- layers -->
  <g fill="none" stroke="#d8d8d8" stroke-width="1"><circle cx="831.3" cy="466" r="2.6"/><path d="M833.2 468 L835.3 470.2"/></g>
  <path d="M880.5 466 L882.5 468 L884.5 466" fill="none" stroke="#d0d0d0" stroke-width="0.9"/>
  <path d="M910 486.5 L912 488.5 L914 486.5" fill="none" stroke="#d0d0d0" stroke-width="0.9"/>
  <path d="M978 486.5 L980 488.5 L982 486.5" fill="none" stroke="#d0d0d0" stroke-width="0.9"/>
  <path d="M978 506.5 L980 508.5 L982 506.5" fill="none" stroke="#d0d0d0" stroke-width="0.9"/>
  <rect x="894.5" y="463" width="8.5" height="7.5" fill="none" stroke="#d8d8d8" stroke-width="1"/>
  <path d="M895.5 469.5 L898 466.5 L899.5 468 L900.5 467 L902 469.5Z" fill="#d8d8d8"/>
  <circle cx="916" cy="466.8" r="4" fill="none" stroke="#d8d8d8" stroke-width="1"/><path d="M916 462.8 A4 4 0 0 1 916 470.8 Z" fill="#d8d8d8"/>
  <path d="M929 463 H937 V464.5 M933 463 V471 M931 471 H935 M929 463 V464.5" fill="none" stroke="#d8d8d8" stroke-width="1.1"/>
  <rect x="946.5" y="463" width="8" height="8" fill="none" stroke="#d8d8d8" stroke-width="1"/>
  <g fill="#d8d8d8"><rect x="945.5" y="462" width="2" height="2"/><rect x="953.5" y="462" width="2" height="2"/><rect x="945.5" y="470" width="2" height="2"/><rect x="953.5" y="470" width="2" height="2"/></g>
  <path d="M962.5 466 h5 v6 h-7 v-4z" fill="#d8d8d8"/><path d="M961 465 l2-2h3" fill="none" stroke="#d8d8d8" stroke-width="0.9"/>
  <rect x="979.5" y="460" width="6" height="14" rx="3" fill="#3a3a3a" stroke="#454545" stroke-width="0.5"/>
  <circle cx="983" cy="464" r="3.3" fill="#eeeeee"/>
  <!-- lock icons -->
  <g fill="#e0e0e0"><rect x="848" y="503.5" width="2" height="2"/><rect x="852" y="503.5" width="2" height="2"/><rect x="850" y="505.5" width="2" height="2"/><rect x="854" y="505.5" width="1.5" height="2"/><rect x="848" y="507.5" width="2" height="2"/><rect x="852" y="507.5" width="2" height="2"/><rect x="850" y="509.5" width="2" height="2"/><rect x="854" y="509.5" width="1.5" height="2"/></g>
  <rect x="847.5" y="503" width="8" height="8.5" fill="none" stroke="#e0e0e0" stroke-width="0.8"/>
  <path d="M864 512.5 c-0.5-2 0.5-3 1.5-3.2 l4.5-6.3 0.9 0.7-3.8 6.6 c-0.3 1.2-1.2 2.3-3.1 2.2z" fill="#e0e0e0"/>
  <g fill="#e0e0e0"><rect x="876" y="507" width="11" height="1"/><rect x="881" y="502" width="1" height="11"/><path d="M881.5 501.5l1.8 2h-3.6z M881.5 513.5l1.8-2h-3.6z M875.5 507.5l2-1.8v3.6z M887.5 507.5l-2-1.8v3.6z"/></g>
  <path d="M893 503.5h11v8h-11z M895 502v11 M902 502v11" fill="none" stroke="#e0e0e0" stroke-width="0.8"/>
  <path d="M893 503.5 L904 511.5" stroke="#e0e0e0" stroke-width="0.7"/>
  <rect x="910.5" y="506" width="8" height="6.5" rx="0.8" fill="#e0e0e0"/>
  <path d="M912 506 v-1.5 a2.5 2.5 0 0 1 5 0 v1.5" fill="none" stroke="#e0e0e0" stroke-width="1.1"/>
  <!-- eye -->
  <path d="M827.5 533.8 Q832 528.8 836.5 533.8 Q832 538.8 827.5 533.8Z" fill="#ececec"/>
  <circle cx="832" cy="533.8" r="1.7" fill="#555"/><circle cx="832" cy="533.8" r="0.7" fill="#ececec"/>
  <!-- thumbnail -->
  <defs><pattern id="chk2" x="845.5" y="522.5" width="3" height="3" patternUnits="userSpaceOnUse"><rect width="3" height="3" fill="#fff"/><rect width="1.5" height="1.5" fill="#cfcfcf"/><rect x="1.5" y="1.5" width="1.5" height="1.5" fill="#cfcfcf"/></pattern></defs>
  <rect x="845.3" y="522.3" width="18.5" height="22.5" fill="url(#chk2)" stroke="#3a3a3a" stroke-width="1"/>
  <path d="M844.3 527.8 V520.8 H851 M858 520.8 H864.8 V527.8 M844.3 539.8 V546.8 H851 M858 546.8 H864.8 V539.8" fill="none" stroke="#f4f4f4" stroke-width="1"/>
  <path d="M845.8 544.8 V540 q3-2.5 5.5-3 l3 1 3-1 q3 0.5 6 3 V544.8z" fill="#3e2a2a"/>
  <path d="M852 537.5 l2.5 2 2.5-2 v2.5 h-5z" fill="#2a3040"/>
  <ellipse cx="854.3" cy="533.5" rx="3.2" ry="4.6" fill="#8a6252"/>
  <path d="M851 532 q-0.3-4.3 3.3-4.5 q3.6 0.2 3.3 4.5 q-0.8-2.6 -3.3-2.7 q-2.5 0.1 -3.3 2.7z" fill="#222"/>
 </svg>
</div>
<div class="a" style="left:26px;top:601px;width:971px;height:45px;background:#777777;border-radius:5px"></div>
<svg class="a" style="left:0;top:596px" width="1024" height="44" viewBox="0 596 1024 44">
 <defs>
  <linearGradient id="fnd" x1="0" y1="0" x2="0" y2="1"><stop offset="0" stop-color="#3fc4f6"/><stop offset="1" stop-color="#2a72e8"/></linearGradient>
  <linearGradient id="lp" x1="0" y1="0" x2="0" y2="1"><stop offset="0" stop-color="#d8dde0"/><stop offset="1" stop-color="#7d8488"/></linearGradient>
  <linearGradient id="ol" x1="0" y1="0" x2="1" y2="1"><stop offset="0" stop-color="#2aa3e8"/><stop offset="1" stop-color="#0a5cb8"/></linearGradient>
  <linearGradient id="ft" x1="0" y1="0" x2="0" y2="1"><stop offset="0" stop-color="#6ee16a"/><stop offset="1" stop-color="#2bb83a"/></linearGradient>
  <radialGradient id="itn" cx="50%" cy="40%" r="60%"><stop offset="0" stop-color="#ffffff"/><stop offset="0.7" stop-color="#f0eef4"/><stop offset="1" stop-color="#c8c0e8"/></radialGradient>
  <linearGradient id="ccg" x1="0" y1="0" x2="1" y2="1"><stop offset="0" stop-color="#ff3a5a"/><stop offset="0.4" stop-color="#ff2a9a"/><stop offset="0.7" stop-color="#ff8a20"/><stop offset="1" stop-color="#ffd020"/></linearGradient>
  <linearGradient id="trs" x1="0" y1="0" x2="0" y2="1"><stop offset="0" stop-color="#e8e8e8"/><stop offset="1" stop-color="#c8c8c8"/></linearGradient>
 </defs>
 <!-- finder -->
 <rect x="32" y="607" width="25.5" height="24" rx="1.5" fill="#f0f2f6"/>
 <path d="M33.5 607 H45.5 C43 611 42 615 42.5 620 H46 C45.8 624 46 628 47.5 631 H33.5 A1.5 1.5 0 0 1 32 629.5 V608.5 A1.5 1.5 0 0 1 33.5 607Z" fill="url(#fnd)"/>
 <path d="M37 622 Q45 628 52 622.5" fill="none" stroke="#1a2a3a" stroke-width="0.9"/>
 <rect x="38.6" y="613.5" width="1" height="2.5" fill="#1a2a3a"/><rect x="50" y="613.5" width="1" height="2.5" fill="#1a2a3a"/>
 <!-- app2 -->
 <g transform="rotate(-12 76.8 618.5)">
  <rect x="64.3" y="606" width="25" height="25" rx="4" fill="#ffffff"/>
  <rect x="66.3" y="608" width="10" height="10" rx="1.5" fill="#7cc04c"/>
  <rect x="77.3" y="608" width="10" height="10" rx="1.5" fill="#6a8ed0"/>
  <rect x="66.3" y="619" width="10" height="10" rx="1.5" fill="#f0b040"/>
  <rect x="77.3" y="619" width="10" height="10" rx="1.5" fill="#e04858"/>
  <rect x="74.3" y="616" width="5" height="5" fill="#fff"/>
 </g>
 <!-- launchpad -->
 <circle cx="109.5" cy="619.4" r="13.4" fill="url(#lp)"/>
 <circle cx="109.5" cy="619.4" r="12.2" fill="#8d9599"/>
 <path d="M102.5 626.5 L104.5 621.5 Q109 612.5 118.5 609 Q115.5 618.5 107.5 623.5 Z" fill="#35393d"/>
 <path d="M101.5 621.5 L105.5 617.5 L108 618 L104.5 622.5Z M107 624.5 L111.5 621 L111.5 623.5 L106.5 627.5Z" fill="#35393d"/>
 <circle cx="112.8" cy="614.8" r="1.6" fill="#8d9599"/>
 <!-- chrome -->
 <circle cx="141.5" cy="619" r="13.4" fill="#e0443a"/>
 <path d="M141.5 619 L153.1 625.7 A13.4 13.4 0 0 1 129.9 625.7 Z" fill="#2fa455"/>
 <path d="M141.5 619 L129.9 625.7 A13.4 13.4 0 0 1 129.9 612.3 Z" fill="#2fa455"/>
 <path d="M141.5 619 L153.1 612.3 A13.4 13.4 0 0 1 153.1 625.7 L141.5 632.4 Z" fill="#f8c82c"/>
 <path d="M141.5 632.4 A13.4 13.4 0 0 1 129.9 625.7 L141.5 619Z" fill="#2fa455"/>
 <circle cx="141.5" cy="619" r="6" fill="#fff"/>
 <circle cx="141.5" cy="619" r="4.6" fill="#4a86e8"/>
 <!-- photos -->
 <circle cx="174.2" cy="619.5" r="13.6" fill="#f4f4f4"/>
 <g transform="translate(174.2 619.5)">
  <ellipse cx="0" cy="-6" rx="3" ry="6" fill="#f8a82c" opacity="0.9"/>
  <ellipse cx="0" cy="-6" rx="3" ry="6" fill="#f8d82c" opacity="0.85" transform="rotate(45)"/>
  <ellipse cx="0" cy="-6" rx="3" ry="6" fill="#9ad84a" opacity="0.85" transform="rotate(90)"/>
  <ellipse cx="0" cy="-6" rx="3" ry="6" fill="#4ac8a8" opacity="0.85" transform="rotate(135)"/>
  <ellipse cx="0" cy="-6" rx="3" ry="6" fill="#5aa8f0" opacity="0.85" transform="rotate(180)"/>
  <ellipse cx="0" cy="-6" rx="3" ry="6" fill="#8a7ae0" opacity="0.85" transform="rotate(225)"/>
  <ellipse cx="0" cy="-6" rx="3" ry="6" fill="#d868c0" opacity="0.85" transform="rotate(270)"/>
  <ellipse cx="0" cy="-6" rx="3" ry="6" fill="#f0585a" opacity="0.85" transform="rotate(315)"/>
 </g>
 <!-- orange book -->
 <rect x="190.4" y="604" width="31.3" height="30.8" rx="2" fill="#f0862a"/>
 <path d="M193 624 Q200 619 206 624 Q212 619 219 622 L215 632 Q209 629 205 632 Q199 628 193 630Z" fill="#f0e0c0"/>
 <circle cx="207" cy="613" r="7.5" fill="#1a3a9a"/>
 <path d="M202 610 q3-3 5 0 q1 3 -2 5z M208 609 q3 0 3 3z" fill="#4a8ad0"/>
 <!-- BC -->
 <rect x="223" y="604" width="31.3" height="31" fill="#ffffff"/>
 <path d="M226.5 621 A12.5 12.5 0 0 1 251 621 Z" fill="#f8b82c"/>
 <path d="M232 621 A6.5 6.5 0 0 1 245.5 621 Z" fill="#fde8a8"/>
 <path d="M225 621 L232 618 L236 621 L240 617 L245 620 L252 617 V628 Q238 624 225 628Z" fill="#1a3a7a"/>
 <!-- outlook -->
 <rect x="263" y="606" width="21" height="25" rx="2" fill="url(#ol)"/>
 <path d="M263 618 L284 618 L284 631 L263 631Z" fill="#1f80d8"/>
 <path d="M263 618 L273.5 625 L284 618" fill="none" stroke="#70c8f8" stroke-width="1"/>
 <rect x="256.8" y="611" width="12.5" height="13" rx="1.2" fill="#0f62b8"/>
 <text x="263" y="621.5" font-family="Liberation Sans" font-weight="700" font-size="9.5" fill="#fff" text-anchor="middle">O</text>
 <!-- onenote -->
 <rect x="296" y="606" width="21" height="25" rx="2" fill="#b04ec8"/>
 <rect x="309" y="606" width="8" height="25" fill="#8a3aa8"/>
 <rect x="289.5" y="611" width="12.5" height="13" rx="1.2" fill="#6a2a9a"/>
 <text x="295.8" y="621.5" font-family="Liberation Sans" font-weight="700" font-size="9.5" fill="#fff" text-anchor="middle">N</text>
 <!-- facetime -->
 <rect x="321.7" y="606" width="28" height="25" rx="5" fill="url(#ft)"/>
 <rect x="326" y="613" width="12" height="11" rx="2" fill="#fff"/>
 <path d="M338 617 L343 613 V624 L338 620Z" fill="#fff"/>
 <circle cx="342.5" cy="625.5" r="7" fill="#f4f4f4"/>
 <path d="M339.5 622.5 q0 5 5.5 6 l1-1.5 -1.5-1.5 -1 1 q-1.5-1 -2-2.5 l1-1 -1.5-1.5z" fill="#2ab83a"/>
 <!-- powerpoint -->
 <circle cx="370" cy="619" r="12" fill="#e86a4a"/>
 <path d="M370 607 A12 12 0 0 1 382 619 H370Z" fill="#f0906a"/>
 <path d="M370 619 H382 A12 12 0 0 1 370 631Z" fill="#c84a2a"/>
 <rect x="354" y="612" width="12.5" height="13" rx="1.2" fill="#c03a1a"/>
 <text x="360.3" y="622.3" font-family="Liberation Sans" font-weight="700" font-size="9.5" fill="#fff" text-anchor="middle">P</text>
 <!-- excel -->
 <rect x="393" y="606" width="21" height="25" rx="2" fill="#1e8a4a"/>
 <rect x="403" y="606" width="11" height="8.5" fill="#3ab070"/>
 <rect x="403" y="614.5" width="11" height="8.5" fill="#22985a"/>
 <rect x="386.6" y="611" width="12.5" height="13" rx="1.2" fill="#107038"/>
 <text x="392.9" y="621.5" font-family="Liberation Sans" font-weight="700" font-size="9.5" fill="#fff" text-anchor="middle">X</text>
 <!-- word -->
 <rect x="425" y="606" width="21.4" height="25" rx="2" fill="#1a5ab8"/>
 <rect x="425" y="606" width="21.4" height="7" rx="2" fill="#48a0f0"/>
 <rect x="425" y="612" width="21.4" height="6.5" fill="#2a7ae0"/>
 <rect x="418.7" y="611" width="12.5" height="13" rx="1.2" fill="#1048a0"/>
 <text x="425" y="621.5" font-family="Liberation Sans" font-weight="700" font-size="9.5" fill="#fff" text-anchor="middle">W</text>
 <!-- teams -->
 <circle cx="474" cy="611" r="3" fill="#7b83eb"/>
 <circle cx="466" cy="609.5" r="4" fill="#7b83eb"/>
 <path d="M458 614 H478.8 V624 Q478.8 631 468 631 Q458 631 458 624Z" fill="#5a60c8"/>
 <rect x="451" y="612" width="12.5" height="13" rx="1.2" fill="#4b53bc"/>
 <text x="457.3" y="622" font-family="Liberation Sans" font-weight="700" font-size="9.5" fill="#fff" text-anchor="middle">T</text>
 <!-- photo booth -->
 <rect x="485" y="606" width="25" height="22" fill="#c8303a"/>
 <g fill="#f0d8d0"><rect x="487" y="608" width="9.5" height="8"/><rect x="498.5" y="608" width="9.5" height="8"/><rect x="487" y="618" width="9.5" height="8"/></g>
 <g fill="#3a2020"><circle cx="491.7" cy="612" r="2.5"/><circle cx="503" cy="612" r="2.5"/><circle cx="491.7" cy="622" r="2.5"/></g>
 <circle cx="505" cy="626" r="6.5" fill="#2a2a2a"/><circle cx="505" cy="626" r="3" fill="#5a5a5a"/>
 <!-- separator -->
 <rect x="520.6" y="606" width="1.3" height="28.5" fill="#5e5e5e"/>
 <!-- itunes -->
 <circle cx="544.5" cy="619.5" r="13.5" fill="url(#itn)"/>
 <circle cx="544.5" cy="619.5" r="13" fill="none" stroke="#b8a0f0" stroke-width="1"/>
 <path d="M541 624.5 V612.5 L550 610.5 V622.5" fill="none" stroke="#f03a7a" stroke-width="1.6"/>
 <circle cx="539.6" cy="624.6" r="2.2" fill="#e83a8a"/><circle cx="548.5" cy="622.6" r="2.2" fill="#a05ae8"/>
 <!-- spotify -->
 <circle cx="576.5" cy="619.2" r="13.8" fill="#1ed760"/>
 <g fill="none" stroke="#111" stroke-linecap="round"><path d="M568 614.5 Q577 611.5 585.5 615.5" stroke-width="2"/><path d="M569 619 Q577 616.5 584.5 620" stroke-width="1.8"/><path d="M570 623.5 Q577 621.5 583 624.2" stroke-width="1.5"/></g>
 <!-- terminal -->
 <rect x="595.7" y="606.5" width="27" height="25" rx="2" fill="#d8d8d8"/>
 <rect x="596.7" y="607.5" width="25" height="23" rx="1.2" fill="#1c1c1c"/>
 <path d="M599 610.5 L601.5 612 L599 613.5" fill="none" stroke="#f0f0f0" stroke-width="0.8"/><rect x="602" y="613" width="3" height="0.8" fill="#f0f0f0"/>
 <!-- vlc -->
 <path d="M640 606 Q641.5 604.5 643 606 L652 629 H631Z" fill="#f5891f"/>
 <path d="M637.3 613 H645.7 L647.3 617.5 H635.7Z M634.6 620.5 H648.4 L650.2 625.5 H632.8Z" fill="#f4f0ea"/>
 <path d="M629 628 H654.5 L655 631.5 Q654.8 632.6 653.5 632.6 H630 Q628.6 632.6 628.6 631.5Z" fill="#e57e17"/>
 <!-- ps -->
 <rect x="659.5" y="605.5" width="29.2" height="28" rx="4.5" fill="#001834"/>
 <text x="674.1" y="625.5" font-family="Liberation Sans" font-weight="700" font-size="15" fill="#31a8ff" text-anchor="middle">Ps</text>
 <!-- cc -->
 <defs><linearGradient id="ccg2" x1="0" y1="0" x2="1" y2="1"><stop offset="0" stop-color="#ff1f4f"/><stop offset="0.35" stop-color="#ff2a8a"/><stop offset="0.6" stop-color="#ff6a2a"/><stop offset="0.85" stop-color="#ffc400"/><stop offset="1" stop-color="#40d080"/></linearGradient></defs>
 <rect x="691.4" y="605" width="29.6" height="29" rx="6" fill="url(#ccg2)"/>
 <g fill="none" stroke="#fff" stroke-width="1.7">
  <path d="M701 625 C696.5 625 695 621.5 696 619 C697 616.5 699.5 615.8 701.3 616.3 C702.5 612.2 708.5 611.2 711.3 614.8 C714.5 614.5 716.8 617.5 716 620.8 C715.4 623.4 713.4 625 711 625 Z"/>
  <path d="M702.5 622.5 C699.8 622.5 699.2 618.5 702.2 618.5 C705 618.5 707 622.5 709.8 622.5 C712.8 622.5 712.8 618.5 709.8 618.5 C707 618.5 705.2 622.5 702.5 622.5Z"/>
 </g>
 <!-- separator -->
 <rect x="729.4" y="606" width="1.3" height="28.5" fill="#5e5e5e"/>
 <!-- photo stack -->
 <path d="M742 607.5 H764 L766 612 H740Z" fill="#3a3a3a"/>
 <rect x="739.6" y="612" width="26.6" height="17" fill="#b0a8a0"/>
 <path d="M741 616 Q750 622 764 614 L764 627 L741 627Z" fill="#c8a888"/>
 <path d="M745 620 L756 626 L760 618Z" fill="#8a6a50"/>
 <rect x="739.6" y="629" width="26.6" height="3.5" fill="#111"/>
 <!-- cc folder -->
 <path d="M772.4 610 H781 L783 607.5 H799.2 V633 H772.4Z" fill="#5ac0f0"/>
 <rect x="772.4" y="612" width="26.8" height="21" rx="1" fill="#e8302a"/>
 <g fill="none" stroke="#fff" stroke-width="1.1"><path d="M780 625 C777.5 622.5 780 618 784.5 620 C786.5 617 792 618.5 791.5 622.5 C794 622.5 794 627 791 627 H783 C780 627 779 623.5 782 622"/></g>
 <!-- network drive -->
 <rect x="806" y="606" width="23.6" height="21" rx="1.5" fill="#3a6aa8"/>
 <rect x="806" y="606" width="23.6" height="10" rx="1.5" fill="#5a88c0"/>
 <rect x="805.5" y="627" width="24.6" height="5" rx="1" fill="#c8c8c8"/>
 <g fill="#fff"><circle cx="813" cy="612" r="1.3"/><circle cx="818" cy="612" r="1.3"/><circle cx="823" cy="612" r="1.3"/><path d="M811.5 614 h3 l0.5 6 h-4z M816.5 614 h3 l0.5 6 h-4z M821.5 614 h3 l0.5 6 h-4z"/></g>
 <!-- window thumbs -->
 <rect x="835.3" y="611" width="29.9" height="17" fill="#111111"/>
 <rect x="836" y="612" width="28" height="2" fill="#2a2a2a"/>
 <circle cx="860" cy="629" r="5" fill="#1ed760"/>
 <path d="M857 627.7 q3-1 6 0.3 M857.5 629.5 q2.5-0.8 5 0.3 M858 631 q2-0.6 4 0.2" fill="none" stroke="#111" stroke-width="0.7"/>
 <rect x="867.8" y="611" width="29.2" height="17" fill="#f4f4f4"/>
 <rect x="889" y="624" width="9" height="9" rx="2" fill="url(#ccg)"/>
 <rect x="900" y="611" width="30" height="17" fill="#ededed"/>
 <rect x="900" y="611" width="30" height="3" fill="#4a4a4a"/>
 <g fill="#888"><rect x="905" y="618" width="2" height="2"/><rect x="912" y="618" width="2" height="2"/><rect x="919" y="618" width="2" height="2"/><rect x="905" y="623" width="2" height="2"/><rect x="919" y="623" width="2" height="2"/></g>
 <g transform="rotate(-12 914 630)"><rect x="908" y="624" width="11" height="11" rx="2" fill="#fff"/><rect x="909" y="625" width="4.5" height="4.5" fill="#7cc04c"/><rect x="914" y="625" width="4.5" height="4.5" fill="#6a8ed0"/><rect x="909" y="630" width="4.5" height="4.5" fill="#f0b040"/><rect x="914" y="630" width="4.5" height="4.5" fill="#e04858"/></g>
 <rect x="932.7" y="611" width="29.7" height="17" fill="#e8e8f0"/>
 <rect x="932.7" y="611" width="29.7" height="3" fill="#464a8a"/>
 <g fill="#9a9ab0"><rect x="936" y="617" width="18" height="1.2"/><rect x="936" y="620" width="14" height="1.2"/><rect x="936" y="623" width="16" height="1.2"/></g>
 <circle cx="955" cy="626" r="3" fill="#7b83eb"/><rect x="950" y="626" width="7" height="7" fill="#4b53bc"/>
 <!-- trash -->
 <path d="M969.5 609 H991 L988 632.5 Q980 634 972.5 632.5Z" fill="url(#trs)"/>
 <ellipse cx="980.2" cy="609.5" rx="10.8" ry="2.5" fill="#d8d8d8" stroke="#f4f4f4" stroke-width="0.5"/>
 <g stroke="#bcbcbc" stroke-width="0.6"><path d="M974 612 L975.5 631 M980.2 612 V632 M986.5 612 L985 631"/></g>
 <g fill="#5a6a7a" opacity="0.7"><circle cx="977" cy="609" r="1.2"/><circle cx="982" cy="608.5" r="1.3"/><circle cx="985" cy="609.5" r="1"/></g>
 <!-- dots -->
 <g fill="#111">
  <circle cx="44.7" cy="637.2" r="1.1"/><circle cx="76.4" cy="637.2" r="1.1"/><circle cx="141.4" cy="637.2" r="1.1"/>
  <circle cx="368" cy="637.2" r="1.1"/><circle cx="400.3" cy="637.2" r="1.1"/><circle cx="432.7" cy="637.2" r="1.1"/><circle cx="464.9" cy="637.2" r="1.1"/>
  <circle cx="544.3" cy="637.2" r="1.1"/><circle cx="576.4" cy="637.2" r="1.1"/><circle cx="609.4" cy="637.2" r="1.1"/><circle cx="641" cy="637.2" r="1.1"/><circle cx="674" cy="637.2" r="1.1"/><circle cx="705.6" cy="637.2" r="1.1"/>
 </g>
</svg>
</body></html>
